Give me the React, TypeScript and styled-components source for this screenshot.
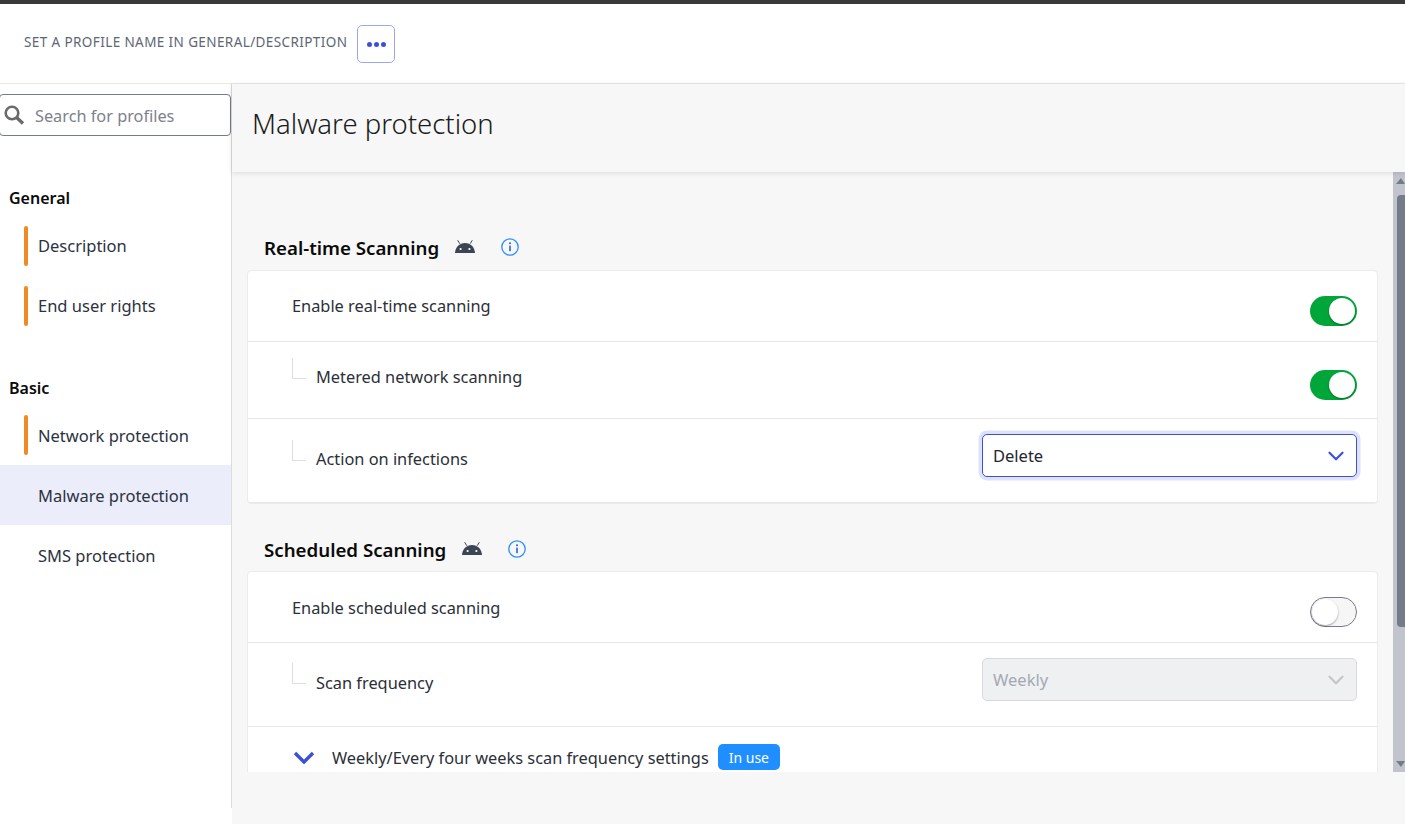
import styled, { createGlobalStyle } from 'styled-components';
import { ChevronDown } from 'lucide-react';

const GlobalStyle = createGlobalStyle`
  html, body {
    margin: 0;
    padding: 0;
    background: #ffffff;
    font-family: "Noto Sans", "Open Sans", sans-serif;
    color: #2b2f38;
  }
  * {
    box-sizing: border-box;
  }
`;

function SearchIcon() {
  return (
    <svg width="21" height="21" viewBox="0 0 21 21" fill="none">
      <circle cx="8" cy="8" r="6.3" stroke="#6b6b6b" strokeWidth="2.6" />
      <path d="M12.6 12.6 19 18.6" stroke="#6b6b6b" strokeWidth="3.4" />
    </svg>
  );
}

function AndroidIcon() {
  return (
    <svg width="20" height="13" viewBox="0 0 20 13" fill="none">
      <path d="M4.6 3.4 2.9 0.6M15.4 3.4l1.7-2.8" stroke="#3b4554" strokeWidth="1" strokeLinecap="round" />
      <path d="M0 13C0.3 7.2 4.4 3 10 3s9.7 4.2 10 10Z" fill="#3b4554" />
      <circle cx="5.6" cy="9" r="1.1" fill="#ffffff" />
      <circle cx="14.4" cy="9" r="1.1" fill="#ffffff" />
    </svg>
  );
}

function InfoIcon() {
  return (
    <svg width="18" height="18" viewBox="0 0 18 18" fill="none">
      <circle cx="9" cy="9" r="8.2" stroke="#2b8fff" strokeWidth="1.3" />
      <circle cx="9" cy="5.3" r="1" fill="#2b5fd9" />
      <rect x="8.2" y="7.6" width="1.6" height="5.6" rx="0.4" fill="#2b5fd9" />
    </svg>
  );
}

function ExpandChevron() {
  return (
    <ExpandIcon width="22" height="13" viewBox="0 0 22 13" fill="none">
      <path d="M2 2l9 9 9-9" stroke="#3b50d9" strokeWidth="3.4" />
    </ExpandIcon>
  );
}

export default function App() {
  return (
    <Page>
      <GlobalStyle />
      <TopStripe />
      <Header>
        <ProfileName>SET A PROFILE NAME IN GENERAL/DESCRIPTION</ProfileName>
        <MoreButton>
          <Dot />
          <Dot />
          <Dot />
        </MoreButton>
      </Header>
      <Body>
        <Sidebar>
          <SearchBox>
            <SearchIcon />
            <SearchText>Search for profiles</SearchText>
          </SearchBox>
          <NavHeading $top={50}>General</NavHeading>
          <NavItem $status $barTop={11}>Description</NavItem>
          <NavItem $status $barTop={11}>End user rights</NavItem>
          <NavHeading $top={41}>Basic</NavHeading>
          <NavItem $status>Network protection</NavItem>
          <NavItem $active>Malware protection</NavItem>
          <NavItem>SMS protection</NavItem>
        </Sidebar>
        <Main>
          <TitleBand>
            <Title>Malware protection</Title>
          </TitleBand>
          <ScrollArea>
            <ScrollContent>
              <SectionHeader $top={59}>
                <SectionTitle>Real-time Scanning</SectionTitle>
                <IconSlot>
                  <AndroidIcon />
                </IconSlot>
                <InfoSlot>
                  <InfoIcon />
                </InfoSlot>
              </SectionHeader>
              <Card $top={5}>
                <Row $height={71}>
                  <RowLabel $top={23}>Enable real-time scanning</RowLabel>
                  <Toggle $on $top={25} />
                </Row>
                <Row $height={77}>
                  <LabelGroup>
                    <Connector $top={16} />
                    <RowLabel $top={23}>Metered network scanning</RowLabel>
                  </LabelGroup>
                  <Toggle $on $top={28} />
                </Row>
                <Row $height={84}>
                  <LabelGroup>
                    <Connector $top={21} />
                    <RowLabel $top={28}>Action on infections</RowLabel>
                  </LabelGroup>
                  <Select>
                    Delete
                    <ChevronDown size={26} color="#3b50d9" strokeWidth={2} />
                  </Select>
                </Row>
              </Card>
              <SectionHeader $top={29}>
                <SectionTitle>Scheduled Scanning</SectionTitle>
                <IconSlot>
                  <AndroidIcon />
                </IconSlot>
                <InfoSlot>
                  <InfoIcon />
                </InfoSlot>
              </SectionHeader>
              <Card $top={4}>
                <Row $height={71}>
                  <RowLabel $top={24}>Enable scheduled scanning</RowLabel>
                  <Toggle $top={25} />
                </Row>
                <Row $height={84}>
                  <LabelGroup>
                    <Connector $top={20} />
                    <RowLabel $top={28}>Scan frequency</RowLabel>
                  </LabelGroup>
                  <Select $disabled>
                    Weekly
                    <ChevronDown size={26} color="#c3c6cc" strokeWidth={2} />
                  </Select>
                </Row>
                <Row $height={84}>
                  <ExpandGroup>
                    <ExpandChevron />
                    <RowLabel $top={1}>Weekly/Every four weeks scan frequency settings</RowLabel>
                    <Badge>In use</Badge>
                  </ExpandGroup>
                </Row>
              </Card>
            </ScrollContent>
            <Scrollbar>
              <ArrowUp />
              <Thumb />
              <ArrowDown />
            </Scrollbar>
          </ScrollArea>
        </Main>
      </Body>
    </Page>
  );
}

const Page = styled.div`
  width: 1405px;
  height: 824px;
  display: flex;
  flex-direction: column;
  overflow: hidden;
`;

const TopStripe = styled.div`
  height: 4px;
  background: #3a3a3a;
`;

const Header = styled.header`
  height: 80px;
  display: flex;
  align-items: flex-start;
  gap: 10px;
  padding: 21px 0 0 24px;
  border-bottom: 1px solid #e8e8e8;
`;

const ProfileName = styled.div`
  font-size: 13.5px;
  line-height: 34px;
  letter-spacing: 0.4px;
  color: #5d6675;
`;

const MoreButton = styled.button`
  width: 38px;
  height: 38px;
  display: flex;
  align-items: center;
  justify-content: center;
  gap: 2px;
  padding: 0;
  background: #ffffff;
  border: 1px solid #9aa8f2;
  border-radius: 5px;
`;

const Dot = styled.span`
  width: 5px;
  height: 5px;
  border-radius: 50%;
  background: #3b50d9;
`;

const Body = styled.div`
  flex: 1;
  display: flex;
  min-height: 0;
`;

const Sidebar = styled.nav`
  width: 232px;
  height: 724px;
  flex: none;
  padding-top: 10px;
  border-right: 1px solid #dcdcdc;
`;

const SearchBox = styled.div`
  width: 232px;
  height: 42px;
  margin-left: -1px;
  display: flex;
  align-items: center;
  gap: 10px;
  padding-left: 4px;
  border: 1px solid #767b8c;
  border-radius: 4px;
`;

const SearchText = styled.span`
  padding-top: 2px;
  font-size: 16.3px;
  color: #7d818c;
`;

const NavHeading = styled.div<{ $top: number }>`
  margin: ${(p) => p.$top}px 0 5px;
  padding-left: 9px;
  font-size: 16px;
  line-height: 24px;
  font-weight: 600;
  color: #0a0a0a;
`;

const NavItem = styled.div<{ $status?: boolean; $active?: boolean; $barTop?: number }>`
  position: relative;
  height: 60px;
  display: flex;
  align-items: center;
  padding-left: 38px;
  font-size: 16.5px;
  color: #2b3240;
  background: ${(p) => (p.$active ? '#ebedfb' : 'transparent')};

  &::before {
    content: '';
    display: ${(p) => (p.$status ? 'block' : 'none')};
    position: absolute;
    left: 24px;
    top: ${(p) => p.$barTop ?? 10}px;
    width: 4px;
    height: 40px;
    border-radius: 2px;
    background: #f08a24;
  }
`;

const Main = styled.main`
  flex: 1;
  min-width: 0;
  display: flex;
  flex-direction: column;
  height: 740px;
  background: #f7f7f7;
`;

const TitleBand = styled.div`
  height: 88px;
  flex: none;
  padding: 17px 0 0 20px;
  box-shadow: 0 1px 5px rgba(0, 0, 0, 0.12);
  position: relative;
`;

const Title = styled.h1`
  margin: 0;
  font-size: 27.5px;
  line-height: 46px;
  font-weight: 300;
  color: #1a1c20;
`;

const ScrollArea = styled.div`
  height: 600px;
  flex: none;
  display: flex;
  overflow: hidden;
`;

const ScrollContent = styled.div`
  flex: 1;
  min-width: 0;
  padding: 0 15px;
  overflow: hidden;
`;

const SectionHeader = styled.div<{ $top: number }>`
  margin-top: ${(p) => p.$top}px;
  height: 34px;
  display: flex;
  align-items: center;
  gap: 16px;
  padding-left: 17px;
`;

const SectionTitle = styled.h2`
  margin: 0 0 2px;
  font-size: 18.7px;
  font-weight: 600;
  color: #0a0a0a;
`;

const IconSlot = styled.span`
  display: flex;
  margin-bottom: 3px;
`;

const InfoSlot = styled(IconSlot)`
  margin-left: 10px;
`;

const Card = styled.section<{ $top: number }>`
  margin-top: ${(p) => p.$top}px;
  background: #ffffff;
  border: 1px solid #ebebeb;
  border-radius: 4px;
`;

const Row = styled.div<{ $height: number }>`
  height: ${(p) => p.$height}px;
  display: flex;
  align-items: flex-start;
  justify-content: space-between;
  padding: 0 20px 0 44px;
  border-bottom: 1px solid #e8e8e8;
`;

const LabelGroup = styled.div`
  display: flex;
  align-items: flex-start;
  gap: 10px;
`;

const Connector = styled.span<{ $top: number }>`
  width: 14px;
  height: 21px;
  margin-top: ${(p) => p.$top}px;
  border-left: 1px solid #dcdee4;
  border-bottom: 1px solid #dcdee4;
`;

const RowLabel = styled.div<{ $top: number }>`
  margin-top: ${(p) => p.$top}px;
  font-size: 16.35px;
  line-height: 24px;
  color: #2b2f38;
`;

const ExpandGroup = styled.div`
  display: flex;
  align-items: center;
  gap: 9px;
  margin: 17px 0 0 1px;
`;

const ExpandIcon = styled.svg`
  margin-right: 8px;
`;

const Badge = styled.span`
  height: 26px;
  display: flex;
  align-items: center;
  padding: 0 11px;
  font-size: 14px;
  color: #ffffff;
  background: #1f8fff;
  border-radius: 5px;
`;

const Toggle = styled.span<{ $on?: boolean; $top: number }>`
  position: relative;
  width: 47px;
  height: 30px;
  margin-top: ${(p) => p.$top}px;
  border-radius: 15px;
  background: ${(p) => (p.$on ? '#00a63a' : '#f6f6f6')};
  border: ${(p) => (p.$on ? 'none' : '1px solid #767b8c')};

  &::after {
    content: '';
    position: absolute;
    top: ${(p) => (p.$on ? '2px' : '1px')};
    left: ${(p) => (p.$on ? '19px' : '1px')};
    width: 26px;
    height: 26px;
    border-radius: 50%;
    background: #ffffff;
    box-shadow: 0 1px 2px rgba(0, 0, 0, 0.35);
  }
`;

const Select = styled.div<{ $disabled?: boolean }>`
  width: 375px;
  height: 43px;
  margin-top: 15px;
  display: flex;
  align-items: center;
  justify-content: space-between;
  padding: 0 7px 0 10px;
  font-size: 16.5px;
  border-radius: 5px;
  color: ${(p) => (p.$disabled ? '#a4a8b2' : '#22262e')};
  background: ${(p) => (p.$disabled ? '#eff0f2' : '#ffffff')};
  border: 1px solid ${(p) => (p.$disabled ? '#d7d9de' : '#3b50d9')};
  box-shadow: ${(p) => (p.$disabled ? 'none' : '0 0 0 3.5px #dde1f9')};
`;

const Scrollbar = styled.div`
  width: 12px;
  flex: none;
  display: flex;
  flex-direction: column;
  align-items: flex-end;
  background: #c1c4cc;
`;

const ArrowUp = styled.span`
  width: 0;
  height: 0;
  margin: 6px 0 0;
  border-left: 5px solid transparent;
  border-right: 4px solid transparent;
  border-bottom: 6px solid #747c8a;
`;

const Thumb = styled.span`
  width: 8px;
  height: 432px;
  margin-top: 11px;
  border-radius: 4px 0 0 4px;
  background: #747c8a;
`;

const ArrowDown = styled.span`
  width: 0;
  height: 0;
  margin-top: auto;
  margin-bottom: 5px;
  border-left: 5px solid transparent;
  border-right: 4px solid transparent;
  border-top: 6px solid #747c8a;
`;
